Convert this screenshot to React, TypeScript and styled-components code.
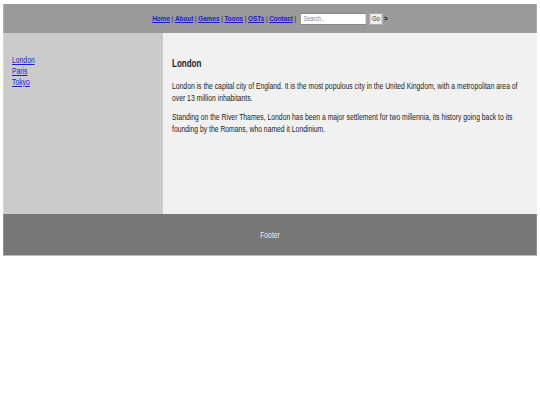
import React from 'react';
import styled, { createGlobalStyle } from 'styled-components';

// the reference is a horizontally squeezed page: lay it out wide and condense it once
const SQUEEZE = 0.8;

const GlobalStyle = createGlobalStyle`
  body {
    margin: 0;
    background: #fff;
    font-family: 'Liberation Sans', Arial, sans-serif;
    font-size: 9px;
    color: #222;
  }
`;

const Page = styled.div`
  width: ${540 / SQUEEZE}px;
  box-sizing: border-box;
  padding: 4px ${3 / SQUEEZE}px;
  transform: scaleX(${SQUEEZE});
  transform-origin: 0 0;
`;

const Header = styled.header`
  display: flex;
  align-items: center;
  justify-content: center;
  height: 29px;
  background: #9a9a9a;
  font-size: 8px;
  font-weight: 700;
  color: #222;
`;

const NavLink = styled.a`
  color: #1a1ad8;
  text-decoration: underline;
`;

const Sep = styled.span`
  margin: 0 2px;
  font-weight: 400;
`;

const Search = styled.input`
  width: ${66 / SQUEEZE}px;
  height: 12px;
  box-sizing: border-box;
  margin-left: 3px;
  padding: 0 3px;
  border: 1px solid #888;
  background: #fff;
  font-family: inherit;
  font-size: 7px;
  &::placeholder {
    color: #888;
  }
`;

const GoButton = styled.button`
  height: 12px;
  width: ${13 / SQUEEZE}px;
  margin-left: 4px;
  padding: 0;
  border: 1px solid #aaa;
  background: #eee;
  font-family: inherit;
  font-size: 7.5px;
  color: #333;
`;

const Arrow = styled.span`
  margin-left: 2px;
  font-size: 8px;
  font-weight: 700;
  color: #111;
`;

const Body = styled.section`
  display: flex;
  height: 181px;
`;

const Sidebar = styled.nav`
  width: ${160 / SQUEEZE}px;
  box-sizing: border-box;
  padding: 22px ${9 / SQUEEZE}px;
  background: #cbcbcb;
`;

const SideList = styled.ul`
  margin: 0;
  padding: 0;
  list-style: none;
  line-height: 11px;
`;

const SideLink = styled.a`
  color: #1a1ad8;
  font-size: 8.5px;
`;

const Article = styled.article`
  flex: 1;
  padding: 22px ${9 / SQUEEZE}px;
  background: #f1f1f1;
`;

const Title = styled.h1`
  margin: 2px 0 9px;
  font-size: 10px;
  font-weight: 700;
  line-height: 14px;
`;

const Para = styled.p`
  margin: 0 0 7px;
  font-size: 8.5px;
  line-height: 12px;
`;

const Footer = styled.footer`
  height: 42px;
  display: flex;
  align-items: center;
  justify-content: center;
  background: #777;
  color: #eee;
  font-size: 8.5px;
  border-bottom: 1px solid #bbb;
  box-sizing: border-box;
`;

const links = ['Home', 'About', 'Games', 'Toons', 'OSTs', 'Contact'];
const cities = ['London', 'Paris', 'Tokyo'];

export default function App() {
  return (
    <Page>
      <GlobalStyle />
      <Header>
        {links.map((l) => (
          <React.Fragment key={l}>
            <NavLink href="#">{l}</NavLink>
            <Sep>|</Sep>
          </React.Fragment>
        ))}
        <Search placeholder="Search.." />
        <GoButton>Go</GoButton>
        <Arrow>&gt;</Arrow>
      </Header>
      <Body>
        <Sidebar>
          <SideList>
            {cities.map((c) => (
              <li key={c}>
                <SideLink href="#">{c}</SideLink>
              </li>
            ))}
          </SideList>
        </Sidebar>
        <Article>
          <Title>London</Title>
          <Para>
            London is the capital city of England. It is the most populous city in the United Kingdom, with a
            metropolitan area of over 13 million inhabitants.
          </Para>
          <Para>
            Standing on the River Thames, London has been a major settlement for two millennia, its history going
            back to its founding by the Romans, who named it Londinium.
          </Para>
        </Article>
      </Body>
      <Footer>Footer</Footer>
    </Page>
  );
}
